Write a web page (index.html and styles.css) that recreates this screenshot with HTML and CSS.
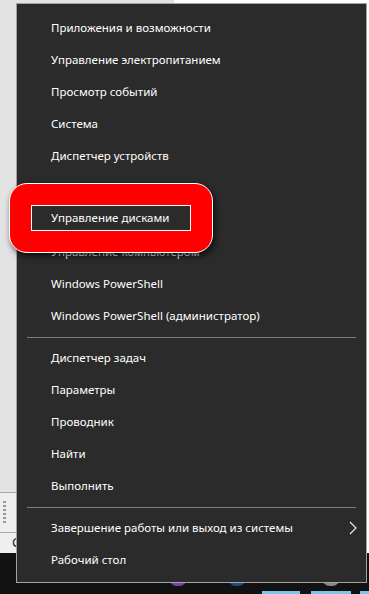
FILE: index.html
```html
<!DOCTYPE html>
<html lang="ru">
<head>
<meta charset="utf-8">
<link rel="stylesheet" href="styles.css">
</head>
<body>
<div class="desktop">
  <div class="window">
    <div class="pane-left">
      <div class="pane-fill"></div>
      <div class="status grip"><span class="dots"></span></div>
      <div class="status letter">C</div>
    </div>
    <div class="pane-right"></div>
  </div>
  <div class="taskbar">
    <span class="blob purple"></span>
    <span class="blob blue"></span>
    <span class="blob gray"></span>
    <span class="tb-bar b1"></span>
    <span class="tb-bar b2"></span>
    <span class="tb-bar b3"></span>
  </div>
</div>

<div class="menu">
  <div class="item">Приложения и возможности</div>
  <div class="item">Управление электропитанием</div>
  <div class="item">Просмотр событий</div>
  <div class="item">Система</div>
  <div class="item">Диспетчер устройств</div>
  <div class="item">Сетевые подключения</div>
  <div class="item covered" aria-hidden="true"></div>
  <div class="item">Управление компьютером</div>
  <div class="item">Windows PowerShell</div>
  <div class="item">Windows PowerShell (администратор)</div>
  <div class="sep"></div>
  <div class="item">Диспетчер задач</div>
  <div class="item">Параметры</div>
  <div class="item">Проводник</div>
  <div class="item">Найти</div>
  <div class="item">Выполнить</div>
  <div class="sep"></div>
  <div class="item sub">Завершение работы или выход из системы
    <svg class="chev" width="8" height="14" viewBox="0 0 8 14"><path d="M1 1 L7 7 L1 13" fill="none" stroke="#e8e8e8" stroke-width="1.2"/></svg>
  </div>
  <div class="item">Рабочий стол</div>
</div>

<div class="callout">
  <div class="callout-inner">Управление дисками</div>
</div>
</body>
</html>
```

FILE: styles.css
```css
* { box-sizing: border-box; }
html, body {
  margin: 0;
  padding: 0;
  width: 369px;
  height: 594px;
  overflow: hidden;
  font-family: "Noto Sans", "Open Sans", sans-serif;
}
.desktop {
  width: 369px;
  height: 594px;
  display: grid;
  grid-template-rows: 553px 41px;
  background: #111;
}
.window {
  display: flex;
}
.pane-left {
  width: 173px;
  display: flex;
  flex-direction: column;
  background: #e3e3e3;
}
.pane-fill { flex: 1; }
.status {
  background: #efefef;
  border-top: 1px solid #a9a9a9;
}
.grip {
  height: 40px;
  padding: 8px 0 0 3px;
}
.dots {
  display: block;
  width: 3px;
  height: 22px;
  background: repeating-linear-gradient(#9a9a9a 0 2px, transparent 2px 4px);
}
.letter {
  height: 21px;
  padding-left: 12px;
  font-size: 13px;
  line-height: 19px;
  color: #222;
}
.pane-right {
  flex: 1;
  background: #fff;
  border-left: 1px solid #d8d8d8;
}
.taskbar {
  position: relative;
  background: #121212;
}
.blob {
  position: absolute;
  top: 25px;
  width: 18px;
  height: 8px;
  border-radius: 0 0 9px 9px;
}
.purple { left: 169px; background: #7a3fb0; }
.blue { left: 228px; background: #1c4f80; }
.gray { left: 322px; background: #8a8a8a; }
.tb-bar {
  position: absolute;
  top: 38px;
  height: 3px;
  background: #7ec3ee;
}
.b1 { left: 262px; width: 38px; }
.b2 { left: 311px; width: 40px; }
.b3 { left: 360px; width: 9px; }

.menu {
  position: absolute;
  left: 16px;
  top: 3px;
  width: 351px;
  height: 580px;
  background: #2b2b2b;
  border: 1px solid #a2a2a2;
  padding: 8px 0 0 0;
  color: #fff;
  font-size: 11.5px;
}
.item {
  height: 32px;
  line-height: 32px;
  padding-left: 34px;
  white-space: nowrap;
  display: flex;
  align-items: center;
}
.sub { justify-content: space-between; padding-right: 9px; }
.chev { display: block; }
.sep {
  height: 10px;
  margin: 0 10px;
  display: flex;
  align-items: center;
}
.sep::before {
  content: "";
  flex: 1;
  height: 1px;
  background: #7b7b7b;
}

.callout {
  position: absolute;
  left: 9px;
  top: 183px;
  width: 204px;
  height: 70px;
  background: #ff0000;
  border: 1.5px solid #fff;
  border-radius: 18px;
  box-shadow: 2px 3px 6px rgba(0,0,0,0.7);
  padding: 21px 0 0 21px;
}
.callout-inner {
  width: 160px;
  height: 26px;
  background: #2b2b2b;
  border: 1px solid #fff;
  color: #fff;
  font-family: "Noto Sans", "Open Sans", sans-serif;
  font-size: 11.5px;
  line-height: 24px;
  padding-left: 19px;
  white-space: nowrap;
}
```
